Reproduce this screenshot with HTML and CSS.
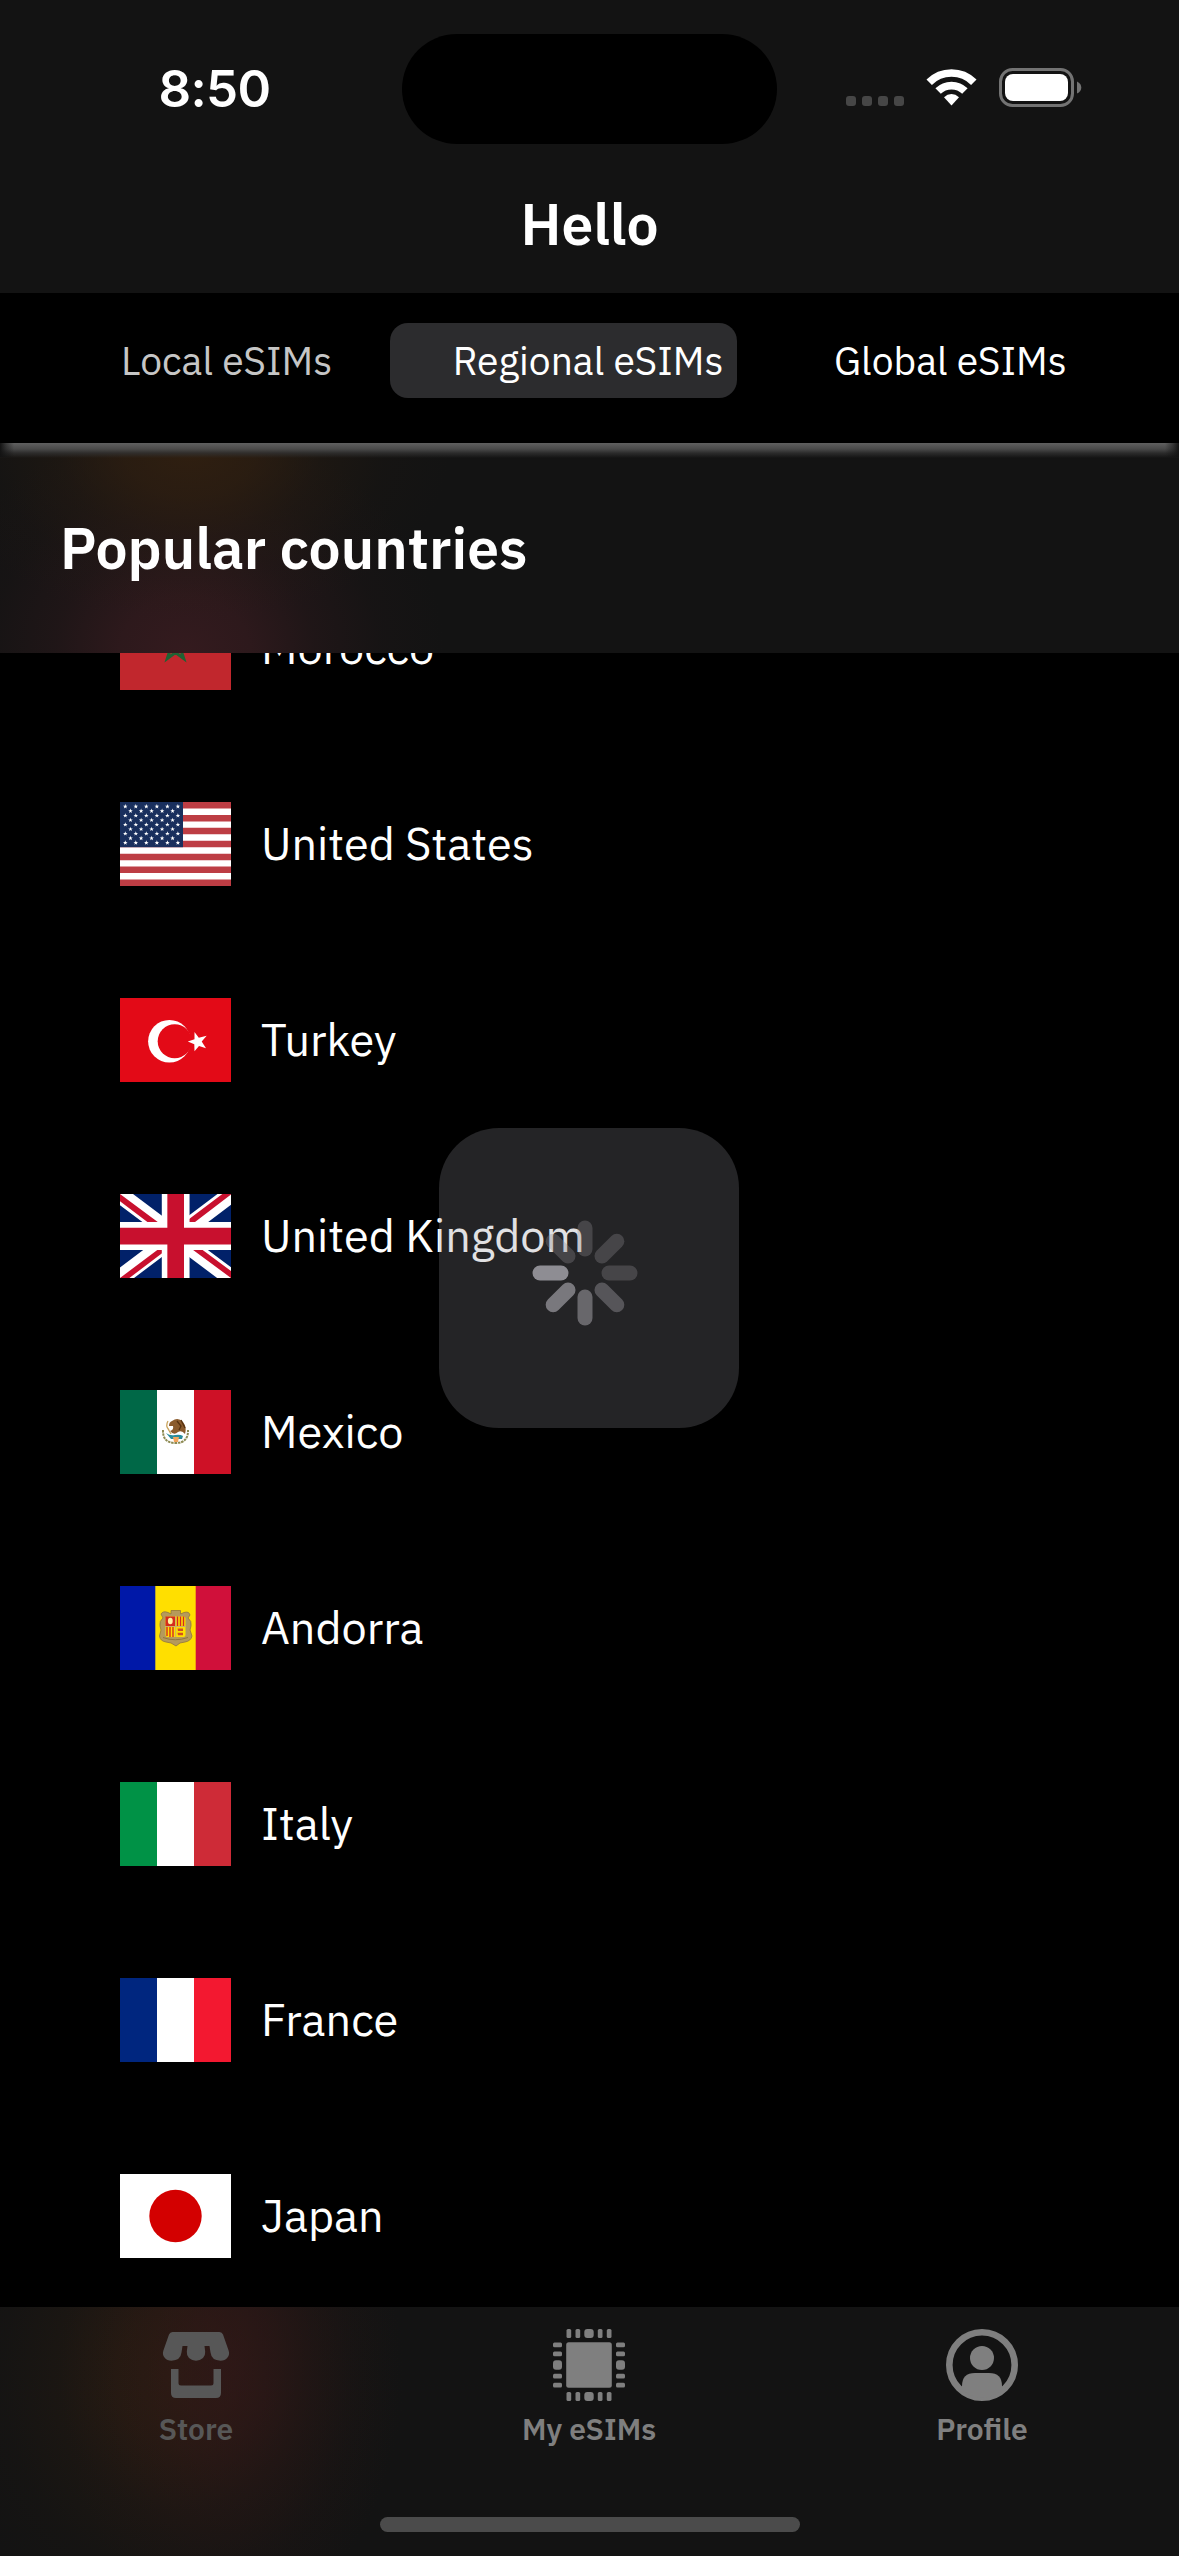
FILE: index.html
```html
<!DOCTYPE html>
<html lang="en">
<head>
<meta charset="utf-8">
<title>Hello</title>
<link rel="stylesheet" href="styles.css">
</head>
<body>
<div class="screen">
  <header class="top">
    <div class="status">
      <div class="time">8:50</div>
      <div class="island"></div>
      <div class="signals">
        <div class="dots"><i></i><i></i><i></i><i></i></div>
        <svg class="wifi" width="51" height="38" viewBox="0 0 51 38">
          <path d="M3.2 14.2A31.6 31.6 0 0 1 47.8 14.2M12.1 23.1A19 19 0 0 1 38.9 23.1" fill="none" stroke="#fff" stroke-width="7.7"/>
          <path d="M25.5 37.5L18 29.2Q21.4 26 25.5 26T33 29.2Z" fill="#fff"/>
        </svg>
        <svg class="battery" width="83" height="39" viewBox="0 0 83 39">
          <rect x="1.5" y="1.5" width="72" height="36" rx="12" fill="none" stroke="#737373" stroke-width="3"/>
          <rect x="6" y="6" width="63" height="27" rx="8" fill="#fff"/>
          <path d="M78 13.5Q82.3 15.5 82.3 19.5T78 25.5Z" fill="#737373"/>
        </svg>
      </div>
    </div>
    <h1 class="title">Hello</h1>
  </header>

  <nav class="segments">
    <a class="segment local">Local eSIMs</a>
    <a class="segment regional">Regional eSIMs</a>
    <a class="segment global">Global eSIMs</a>
  </nav>

  <h2 class="section">Popular countries</h2>

  <main class="viewport">
    <ul class="list">
      <li class="row">
        <svg class="flag" viewBox="0 0 111 84"><rect width="111" height="84" fill="#c1272d"/><path d="M55.5 27L63.7 52.5 42 36.7H69L47.3 52.5Z" fill="none" stroke="#1f6233" stroke-width="3"/></svg>
        <span>Morocco</span>
      </li>
      <li class="row">
        <svg class="flag" viewBox="0 0 111 84">
          <defs>
            <path id="star" d="M0-2.4L.6-.7H2.3L.95.3 1.4 2 0 1-1.4 2-.95.3-2.3-.7H-.6z" fill="#fff"/>
            <g id="row6"><use href="#star" x="5.3"/><use href="#star" x="15.8"/><use href="#star" x="26.3"/><use href="#star" x="36.9"/><use href="#star" x="47.4"/><use href="#star" x="57.9"/></g>
            <g id="row5"><use href="#star" x="10.5"/><use href="#star" x="21.1"/><use href="#star" x="31.6"/><use href="#star" x="42.1"/><use href="#star" x="52.6"/></g>
          </defs>
          <rect width="111" height="84" fill="#fff"/>
          <path d="M0 3.23H111M0 16.15H111M0 29.08H111M0 42H111M0 54.92H111M0 67.85H111M0 80.77H111" stroke="#bd3d44" stroke-width="6.46"/>
          <rect width="63" height="45.2" fill="#192f5d"/>
          <use href="#row6" y="4.5"/><use href="#row5" y="9"/><use href="#row6" y="13.6"/><use href="#row5" y="18.1"/><use href="#row6" y="22.6"/><use href="#row5" y="27.1"/><use href="#row6" y="31.6"/><use href="#row5" y="36.2"/><use href="#row6" y="40.7"/>
        </svg>
        <span>United States</span>
      </li>
      <li class="row">
        <svg class="flag" viewBox="0 0 111 84">
          <rect width="111" height="84" fill="#e30a17"/>
          <circle cx="49.4" cy="43.3" r="21.3" fill="#fff"/><circle cx="54.7" cy="43.3" r="17" fill="#e30a17"/>
          <path d="M67.8 43.6L74.5 41.2 74.5 34 78.8 39.7 86.7 37.7 81.7 43.6 86 50.2 79 47.9 74.5 53.3 74.3 46.2Z" fill="#fff"/>
        </svg>
        <span>Turkey</span>
      </li>
      <li class="row">
        <svg class="flag" viewBox="0 0 640 480" preserveAspectRatio="none">
          <path fill="#012169" d="M0 0h640v480H0z"/>
          <path fill="#fff" d="m75 0 244 181L562 0h78v62L400 241l240 178v61h-80L320 301 81 480H0v-60l239-178L0 64V0z"/>
          <path fill="#c8102e" d="m424 281 216 159v40L369 281zm-184 20 6 35L54 480H0zM640 0v3L391 191l2-44L590 0zM0 0l239 176h-60L0 42z"/>
          <path fill="#fff" d="M241 0v480h160V0zM0 160v160h640V160z"/>
          <path fill="#c8102e" d="M0 193v96h640v-96zM273 0v480h96V0z"/>
        </svg>
        <span>United Kingdom</span>
      </li>
      <li class="row">
        <svg class="flag" viewBox="0 0 111 84">
          <rect width="111" height="84" fill="#fff"/><rect width="37" height="84" fill="#006847"/><rect x="74" width="37" height="84" fill="#ce1126"/>
          <path d="M43 40Q42.5 53 55.5 53T68 40" fill="none" stroke="#8d8a52" stroke-width="2" stroke-dasharray="2.5 .8"/>
          <path d="M52 31Q58 26.5 63 32 67 37 65 44 62 40 58 42 54 46 50 41 54 40 53 36L49 36Q49 32 52 31Z" fill="#8a5a2c"/>
          <path d="M57 31L61 36 59 40M61 30L65 38" stroke="#54300f" stroke-width="1.3" fill="none"/>
          <path d="M48 31Q45 36 49 40M47 37L51 44" fill="none" stroke="#c9a35a" stroke-width="1.3"/>
          <path d="M46 43Q50 46 55 45T63 46L62 49 51 49Z" fill="#2a8c9b"/>
          <path d="M53 47H59L58 52H54Z" fill="#f2a45c"/>
        </svg>
        <span>Mexico</span>
      </li>
      <li class="row">
        <svg class="flag" viewBox="0 0 111 84">
          <rect width="111" height="84" fill="#ffdf00"/><rect width="35.3" height="84" fill="#0018a8"/><rect x="75.7" width="35.3" height="84" fill="#d0103a"/>
          <path d="M41 28Q43 24.5 48 26.5L51 28 51 24.5H60.5V28L64 26.5Q69 25 70 29L68 32Q72 35 71 40L70 44 72 50Q71 55 65 56L60 57 56 60 51 57 46 56Q40 55 39.5 50L41 44 40 40Q39 35 43 32Z" fill="#b59a5b" stroke="#8f7640" stroke-width=".8"/>
          <rect x="45.5" y="30.5" width="20" height="20.5" rx="2" fill="#ffdf00"/>
          <rect x="45.5" y="30.5" width="9.5" height="9.5" fill="#d52b1e"/><ellipse cx="50.3" cy="35" rx="2.4" ry="3.2" fill="#fff3a0"/>
          <path d="M57.5 30.5V40M60.5 30.5V40M63.5 30.5V40M47 41V50M50 41V51M53 41V51" stroke="#d52b1e" stroke-width="1.4"/>
          <path d="M57.5 42.5H63V45H58ZM57.5 46.8H63V49.3H58Z" fill="#d2501e"/>
          <path d="M45 40.5H66M55.7 30V51" stroke="#c9b06a" stroke-width="1"/>
          <path d="M43 51.5Q55 56 68 51.5" fill="none" stroke="#8f7640" stroke-width="1"/>
        </svg>
        <span>Andorra</span>
      </li>
      <li class="row">
        <svg class="flag" viewBox="0 0 111 84"><rect width="111" height="84" fill="#fff"/><rect width="37" height="84" fill="#009246"/><rect x="74" width="37" height="84" fill="#ce2b37"/></svg>
        <span>Italy</span>
      </li>
      <li class="row">
        <svg class="flag" viewBox="0 0 111 84"><rect width="111" height="84" fill="#fff"/><rect width="37" height="84" fill="#00267f"/><rect x="74" width="37" height="84" fill="#f31830"/></svg>
        <span>France</span>
      </li>
      <li class="row">
        <svg class="flag" viewBox="0 0 111 84"><rect width="111" height="84" fill="#fff"/><circle cx="55.5" cy="42" r="26.2" fill="#d30000"/></svg>
        <span>Japan</span>
      </li>
    </ul>
  </main>

  <footer class="tabs">
    <a class="tab store">
      <svg class="icon" viewBox="0 0 72 72">
        <path d="M12.5 3H59.5Q62 3 63 5.500L68.600 21.500Q70 25.500 67.500 28.500 65 31.700 60.500 31.700 51.500 31.500 50.500 23.500L49.500 17H44.500L45.200 22.500Q45.500 26.500 43 29 40 31.700 36 31.700T29 29Q26.500 26.500 26.800 22.500L27.500 17H22.500L21.500 23.500Q20.500 31.500 11.500 31.700 7 31.700 4.500 28.500 2 25.500 3.400 21.500L9 5.500Q10 3 12.500 3Z"/>
        <path d="M11 40H18.5V54Q18.5 56.5 21 56.5H51Q53.5 56.5 53.5 54V40H61V64Q61 69 56 69H16Q11 69 11 64Z"/>
      </svg>
      <span>Store</span>
    </a>
    <a class="tab">
      <svg class="icon" viewBox="0 0 72 72">
        <rect x="13.2" y="13.2" width="45.6" height="45.6" rx="2.5"/>
        <g id="pins">
          <rect x="13.5" width="4.7" height="9" rx="1.5"/><rect x="22.5" width="4.7" height="9" rx="1.5"/><rect x="31.3" width="9.4" height="9" rx="3"/><rect x="44.8" width="4.7" height="9" rx="1.5"/><rect x="53.8" width="4.7" height="9" rx="1.5"/>
        </g>
        <use href="#pins" transform="rotate(90 36 36)"/><use href="#pins" transform="rotate(180 36 36)"/><use href="#pins" transform="rotate(270 36 36)"/>
      </svg>
      <span>My eSIMs</span>
    </a>
    <a class="tab">
      <svg class="icon" viewBox="0 0 72 72">
        <circle cx="36" cy="36" r="32.7" fill="none" stroke="#7f7f7f" stroke-width="6.6"/>
        <circle cx="36" cy="29" r="12"/>
        <path d="M16 60V57Q16 44 29 44H43Q56 44 56 57V60Q46 69 36 69T16 60Z"/>
      </svg>
      <span>Profile</span>
    </a>
    <div class="home"></div>
  </footer>

  <div class="hud">
    <svg width="106" height="106" viewBox="-53 -53 106 106">
      <g fill="#8e8d93">
        <rect x="-7.5" y="-52.5" width="15" height="36" rx="7.5" opacity=".32"/>
        <rect x="-7.5" y="-52.5" width="15" height="36" rx="7.5" opacity=".32" transform="rotate(45)"/>
        <rect x="-7.5" y="-52.5" width="15" height="36" rx="7.5" opacity=".32" transform="rotate(90)"/>
        <rect x="-7.5" y="-52.5" width="15" height="36" rx="7.5" opacity=".47" transform="rotate(135)"/>
        <rect x="-7.5" y="-52.5" width="15" height="36" rx="7.5" opacity=".64" transform="rotate(180)"/>
        <rect x="-7.5" y="-52.5" width="15" height="36" rx="7.5" opacity=".8" transform="rotate(225)"/>
        <rect x="-7.5" y="-52.5" width="15" height="36" rx="7.5" transform="rotate(270)"/>
        <rect x="-7.5" y="-52.5" width="15" height="36" rx="7.5" opacity=".32" transform="rotate(315)"/>
      </g>
    </svg>
  </div>
</div>
</body>
</html>
```
FILE: styles.css
```css
* { box-sizing: border-box; }
body {
  margin: 0;
  background: #000;
  color: #fff;
  font-family: "IBM Plex Sans", "Open Sans", "Noto Sans", sans-serif;
}
h1, h2, ul { margin: 0; padding: 0; list-style: none; }
h1, h2 { font-weight: 600; }
.screen {
  position: relative;
  display: flex;
  flex-direction: column;
  width: 1179px;
  height: 2556px;
  overflow: hidden;
}

/* status bar and title */
.top { height: 293px; background: #131313; }
.status {
  display: grid;
  grid-template-columns: 402px 375px 402px;
  height: 177px;
  padding-top: 34px;
}
.time {
  padding-left: 158.5px;
  font: 600 51px/110px Inter, sans-serif;
  letter-spacing: -.7px;
}
.island { height: 110px; border-radius: 55px; background: #000; }
.signals { display: flex; align-items: flex-start; padding: 34px 0 0 69px; }
.dots { display: flex; gap: 6px; padding-top: 28px; margin-right: 22px; }
.dots i { width: 10px; height: 10px; border-radius: 3px; background: #464646; }
.wifi { margin-right: 22px; }
.title { height: 96px; font-size: 57px; line-height: 95px; text-align: center; }

/* segmented control */
.segments {
  display: flex;
  height: 150px;
  padding-top: 30px;
  font-size: 39px;
  line-height: 75px;
  white-space: nowrap;
}
.segment { height: 75px; }
.local { width: 390px; padding-left: 121px; color: #c6c6c6; }
.regional { width: 347px; padding-left: 62.7px; border-radius: 18px; background: #2c2c2e; }
.global { padding-left: 97px; }

.section {
  height: 210px;
  padding-left: 60px;
  font-size: 57px;
  line-height: 210px;
  background:
    linear-gradient(90deg, #131313 0, rgba(19, 19, 19, .5) 6px, transparent 14px, transparent 1165px, rgba(19, 19, 19, .5) 1173px, #131313 100%) top / 100% 14px no-repeat,
    linear-gradient(#606060, rgba(76, 76, 76, .95) 6px, rgba(50, 50, 50, .8) 10px, rgba(19, 19, 19, 0) 15px),
    radial-gradient(260px 170px at 190px 10px, rgba(50, 32, 16, .9), rgba(50, 32, 16, .7) 25%, rgba(50, 32, 16, .3) 50%, rgba(50, 32, 16, .08) 75%, transparent),
    radial-gradient(260px 230px at 185px 210px, rgba(54, 27, 31, .95), rgba(54, 27, 31, .75) 25%, rgba(54, 27, 31, .35) 50%, rgba(54, 27, 31, .1) 75%, transparent),
    #131313;
}

/* scrolling country list */
.viewport { height: 1654px; overflow: hidden; }
.list { margin-top: -103px; }
.row {
  display: flex;
  align-items: center;
  gap: 30px;
  height: 196px;
  padding-left: 120px;
  font-size: 45px;
  line-height: 60px;
}
.row span { padding-bottom: 2px; }
.flag { display: block; width: 111px; height: 84px; }

/* tab bar */
.tabs {
  position: relative;
  display: grid;
  grid-template-columns: repeat(3, 393px);
  height: 249px;
  padding-top: 22px;
  background:
    radial-gradient(170px 270px at 230px 60px, rgba(52, 22, 26, .6), rgba(52, 22, 26, .45) 25%, rgba(52, 22, 26, .22) 50%, rgba(52, 22, 26, .07) 75%, transparent),
    radial-gradient(230px 270px at 175px 70px, rgba(50, 32, 16, .7), rgba(50, 32, 16, .55) 25%, rgba(50, 32, 16, .25) 50%, rgba(50, 32, 16, .08) 75%, transparent),
    #131313;
}
.tab {
  display: flex;
  flex-direction: column;
  align-items: center;
  padding-right: 1px;
  color: #7f7f7f;
  fill: #7f7f7f;
  font-size: 30px;
  font-weight: 600;
  line-height: 40px;
}
.icon { width: 72px; height: 72px; margin-bottom: 8px; }
.store { color: #575757; fill: #575757; }
.home {
  position: absolute;
  left: 380px;
  bottom: 24px;
  width: 420px;
  height: 15px;
  border-radius: 8px;
  background: #4b4b4b;
}

/* loading overlay */
.hud {
  position: absolute;
  z-index: 2;
  left: 439px;
  top: 1128px;
  width: 300px;
  height: 300px;
  padding: 92px 93px;
  border-radius: 60px;
  background: rgba(139, 139, 147, .26);
}
```
